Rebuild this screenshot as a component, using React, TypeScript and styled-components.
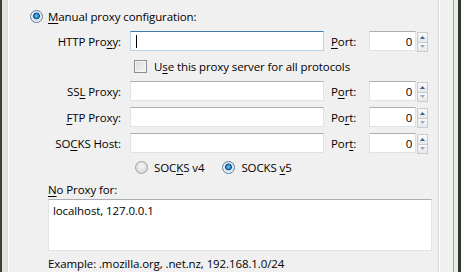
import React from "react";
import styled, { createGlobalStyle } from "styled-components";

const Global = createGlobalStyle`
  html, body { margin: 0; padding: 0; }
  body {
    font-family: "Open Sans", "Noto Sans", sans-serif;
    font-size: 11.5px;
    letter-spacing: -0.1px;
    color: #000;
  }
`;

const Window = styled.div`
  width: 461px;
  height: 272px;
  box-sizing: border-box;
  overflow: hidden;
  display: flex;
  border-left: 2px solid #3a4136;
  border-right: 3px solid #2f382d;
  background: linear-gradient(90deg, #dfe3db, #e9ece6);
`;

const Dialog = styled.div`
  margin-left: 5px;
  margin-right: 4px;
  flex: 1;
  background: #f0f0f0;
  border-right: 1px solid #9fa39c;
  display: flex;
`;

const GroupBox = styled.div`
  width: 430px;
  border-left: 1px solid #d5d9dc;
  border-right: 1px solid #d5d9dc;
  box-shadow: inset 1px 0 0 #fff, 1px 0 0 #fff;
  display: flex;
  flex-direction: column;
`;

const ManualRow = styled.label`
  display: flex;
  align-items: center;
  gap: 5px;
  height: 20px;
  margin-top: 6px;
  padding-left: 22px;
`;

const Body = styled.div`
  padding-left: 40px;
  display: flex;
  flex-direction: column;
`;

const ProxyGrid = styled.div`
  margin-top: 5px;
  display: grid;
  grid-template-columns: 82px 194px 45px 59px;
  row-gap: 6px;
  grid-template-rows: 20px 18px 20px 20px 20px 16px;
`;

const FieldLabel = styled.span<{ $right?: boolean }>`
  display: flex;
  align-items: center;
  justify-content: ${({ $right }) => ($right ? "flex-end" : "flex-start")};
  padding-left: ${({ $right }) => ($right ? "0" : "7px")};
  padding-right: ${({ $right }) => ($right ? "9px" : "0")};
  white-space: nowrap;
`;

const Field = styled.div<{ $focused?: boolean }>`
  box-sizing: border-box;
  height: 20px;
  background: #fff;
  border: 1px solid ${({ $focused }) => ($focused ? "#b6d2ea" : "#dfe3e9")};
  border-top-color: ${({ $focused }) => ($focused ? "#3d7bad" : "#abadb3")};
  display: flex;
  align-items: center;
  padding: 0 4px;
`;

const Caret = styled.span`
  width: 1px;
  height: 13px;
  background: #000;
  margin-left: 1px;
`;

const PortWrap = styled.div`
  display: flex;
  gap: 1px;
`;

const PortField = styled(Field)`
  width: 48px;
  justify-content: flex-end;
  padding-right: 3px;
`;

const Spinner = styled.div`
  display: flex;
  flex-direction: column;
  width: 11px;
  height: 20px;
  margin-top: 1px;
`;

const SpinBtn = styled.div`
  flex: 1;
  box-sizing: border-box;
  border: 1px solid #c9cbcf;
  background: linear-gradient(#fbfbfb, #e6e7e9);
  display: flex;
  align-items: center;
  justify-content: center;
  & + & { border-top: none; }
`;

const CheckRow = styled.label`
  grid-column: 2 / 5;
  display: flex;
  align-items: center;
  gap: 7px;
  padding-left: 4px;
`;

const Box = styled.span`
  box-sizing: border-box;
  width: 13px;
  height: 13px;
  border: 1px solid #8f8f8f;
  background: linear-gradient(135deg, #d9dadb, #f7f7f7);
  box-shadow: inset 0 0 0 1px #f4f4f4;
`;

const RadioRow = styled.div`
  grid-column: 2 / 5;
  display: flex;
  align-items: center;
  padding-left: 5px;
`;

const RadioOption = styled.label<{ $gap?: number }>`
  display: flex;
  align-items: center;
  gap: 6px;
  margin-right: ${({ $gap }) => $gap ?? 0}px;
`;

const Radio = styled.span<{ $checked?: boolean }>`
  box-sizing: border-box;
  width: 13px;
  height: 13px;
  border-radius: 50%;
  border: 1px solid ${({ $checked }) => ($checked ? "#5a7fa3" : "#a0a0a0")};
  background: ${({ $checked }) =>
    $checked
      ? "radial-gradient(circle at 50% 45%, #7fd2f7 0, #2a8bd0 22%, #134f8c 38%, #dfe7ee 46%, #f6f8fa 100%)"
      : "radial-gradient(circle at 50% 40%, #f8f8f8 0, #dedede 60%, #cfcfcf 100%)"};
`;

const NoProxyLabel = styled.div`
  margin-top: 6px;
  height: 16px;
  display: flex;
  align-items: center;
`;

const TextArea = styled.div`
  margin-top: 2px;
  box-sizing: border-box;
  width: 384px;
  height: 52px;
  background: #fff;
  border: 1px solid #dfe3e9;
  border-top-color: #abadb3;
  padding: 3px 4px;
`;

const Hint = styled.div`
  margin-top: 4px;
  height: 16px;
  display: flex;
  align-items: center;
`;

const Key = styled.span`
  text-decoration: underline;
  text-underline-offset: 2px;
`;

const Arrow = ({ up, muted }: { up?: boolean; muted?: boolean }) => (
  <svg width="5" height="3" viewBox="0 0 5 3">
    <path d={up ? "M0 3 L2.5 0 L5 3 Z" : "M0 0 L2.5 3 L5 0 Z"} fill={muted ? "#9aa9bf" : "#3c5e8e"} />
  </svg>
);

const Port = ({ k }: { k: number }) => {
  const word = "Port";
  return (
    <>
      <FieldLabel>
        <span>
          {word.slice(0, k)}
          <Key>{word[k]}</Key>
          {word.slice(k + 1)}:
        </span>
      </FieldLabel>
      <PortWrap>
        <PortField>0</PortField>
        <Spinner>
          <SpinBtn><Arrow up /></SpinBtn>
          <SpinBtn><Arrow muted /></SpinBtn>
        </Spinner>
      </PortWrap>
    </>
  );
};

export default function App() {
  return (
    <>
      <Global />
      <Window>
        <Dialog>
          <GroupBox>
            <ManualRow>
              <Radio $checked />
              <span><Key>M</Key>anual proxy configuration:</span>
            </ManualRow>
            <Body>
              <ProxyGrid>
                <FieldLabel $right><span>HTTP Pro<Key>x</Key>y:</span></FieldLabel>
                <Field $focused><Caret /></Field>
                <Port k={0} />

                <CheckRow>
                  <Box />
                  <span>U<Key>s</Key>e this proxy server for all protocols</span>
                </CheckRow>

                <FieldLabel $right><span>SS<Key>L</Key> Proxy:</span></FieldLabel>
                <Field />
                <Port k={1} />

                <FieldLabel $right><span><Key>F</Key>TP Proxy:</span></FieldLabel>
                <Field />
                <Port k={2} />

                <FieldLabel $right><span>SO<Key>C</Key>KS Host:</span></FieldLabel>
                <Field />
                <Port k={3} />

                <RadioRow>
                  <RadioOption $gap={18}>
                    <Radio />
                    <span>SOC<Key>K</Key>S v4</span>
                  </RadioOption>
                  <RadioOption>
                    <Radio $checked />
                    <span>SOCKS <Key>v</Key>5</span>
                  </RadioOption>
                </RadioRow>
              </ProxyGrid>

              <NoProxyLabel><span><Key>N</Key>o Proxy for:</span></NoProxyLabel>
              <TextArea>localhost, 127.0.0.1</TextArea>
              <Hint>Example: .mozilla.org, .net.nz, 192.168.1.0/24</Hint>
            </Body>
          </GroupBox>
        </Dialog>
      </Window>
    </>
  );
}
